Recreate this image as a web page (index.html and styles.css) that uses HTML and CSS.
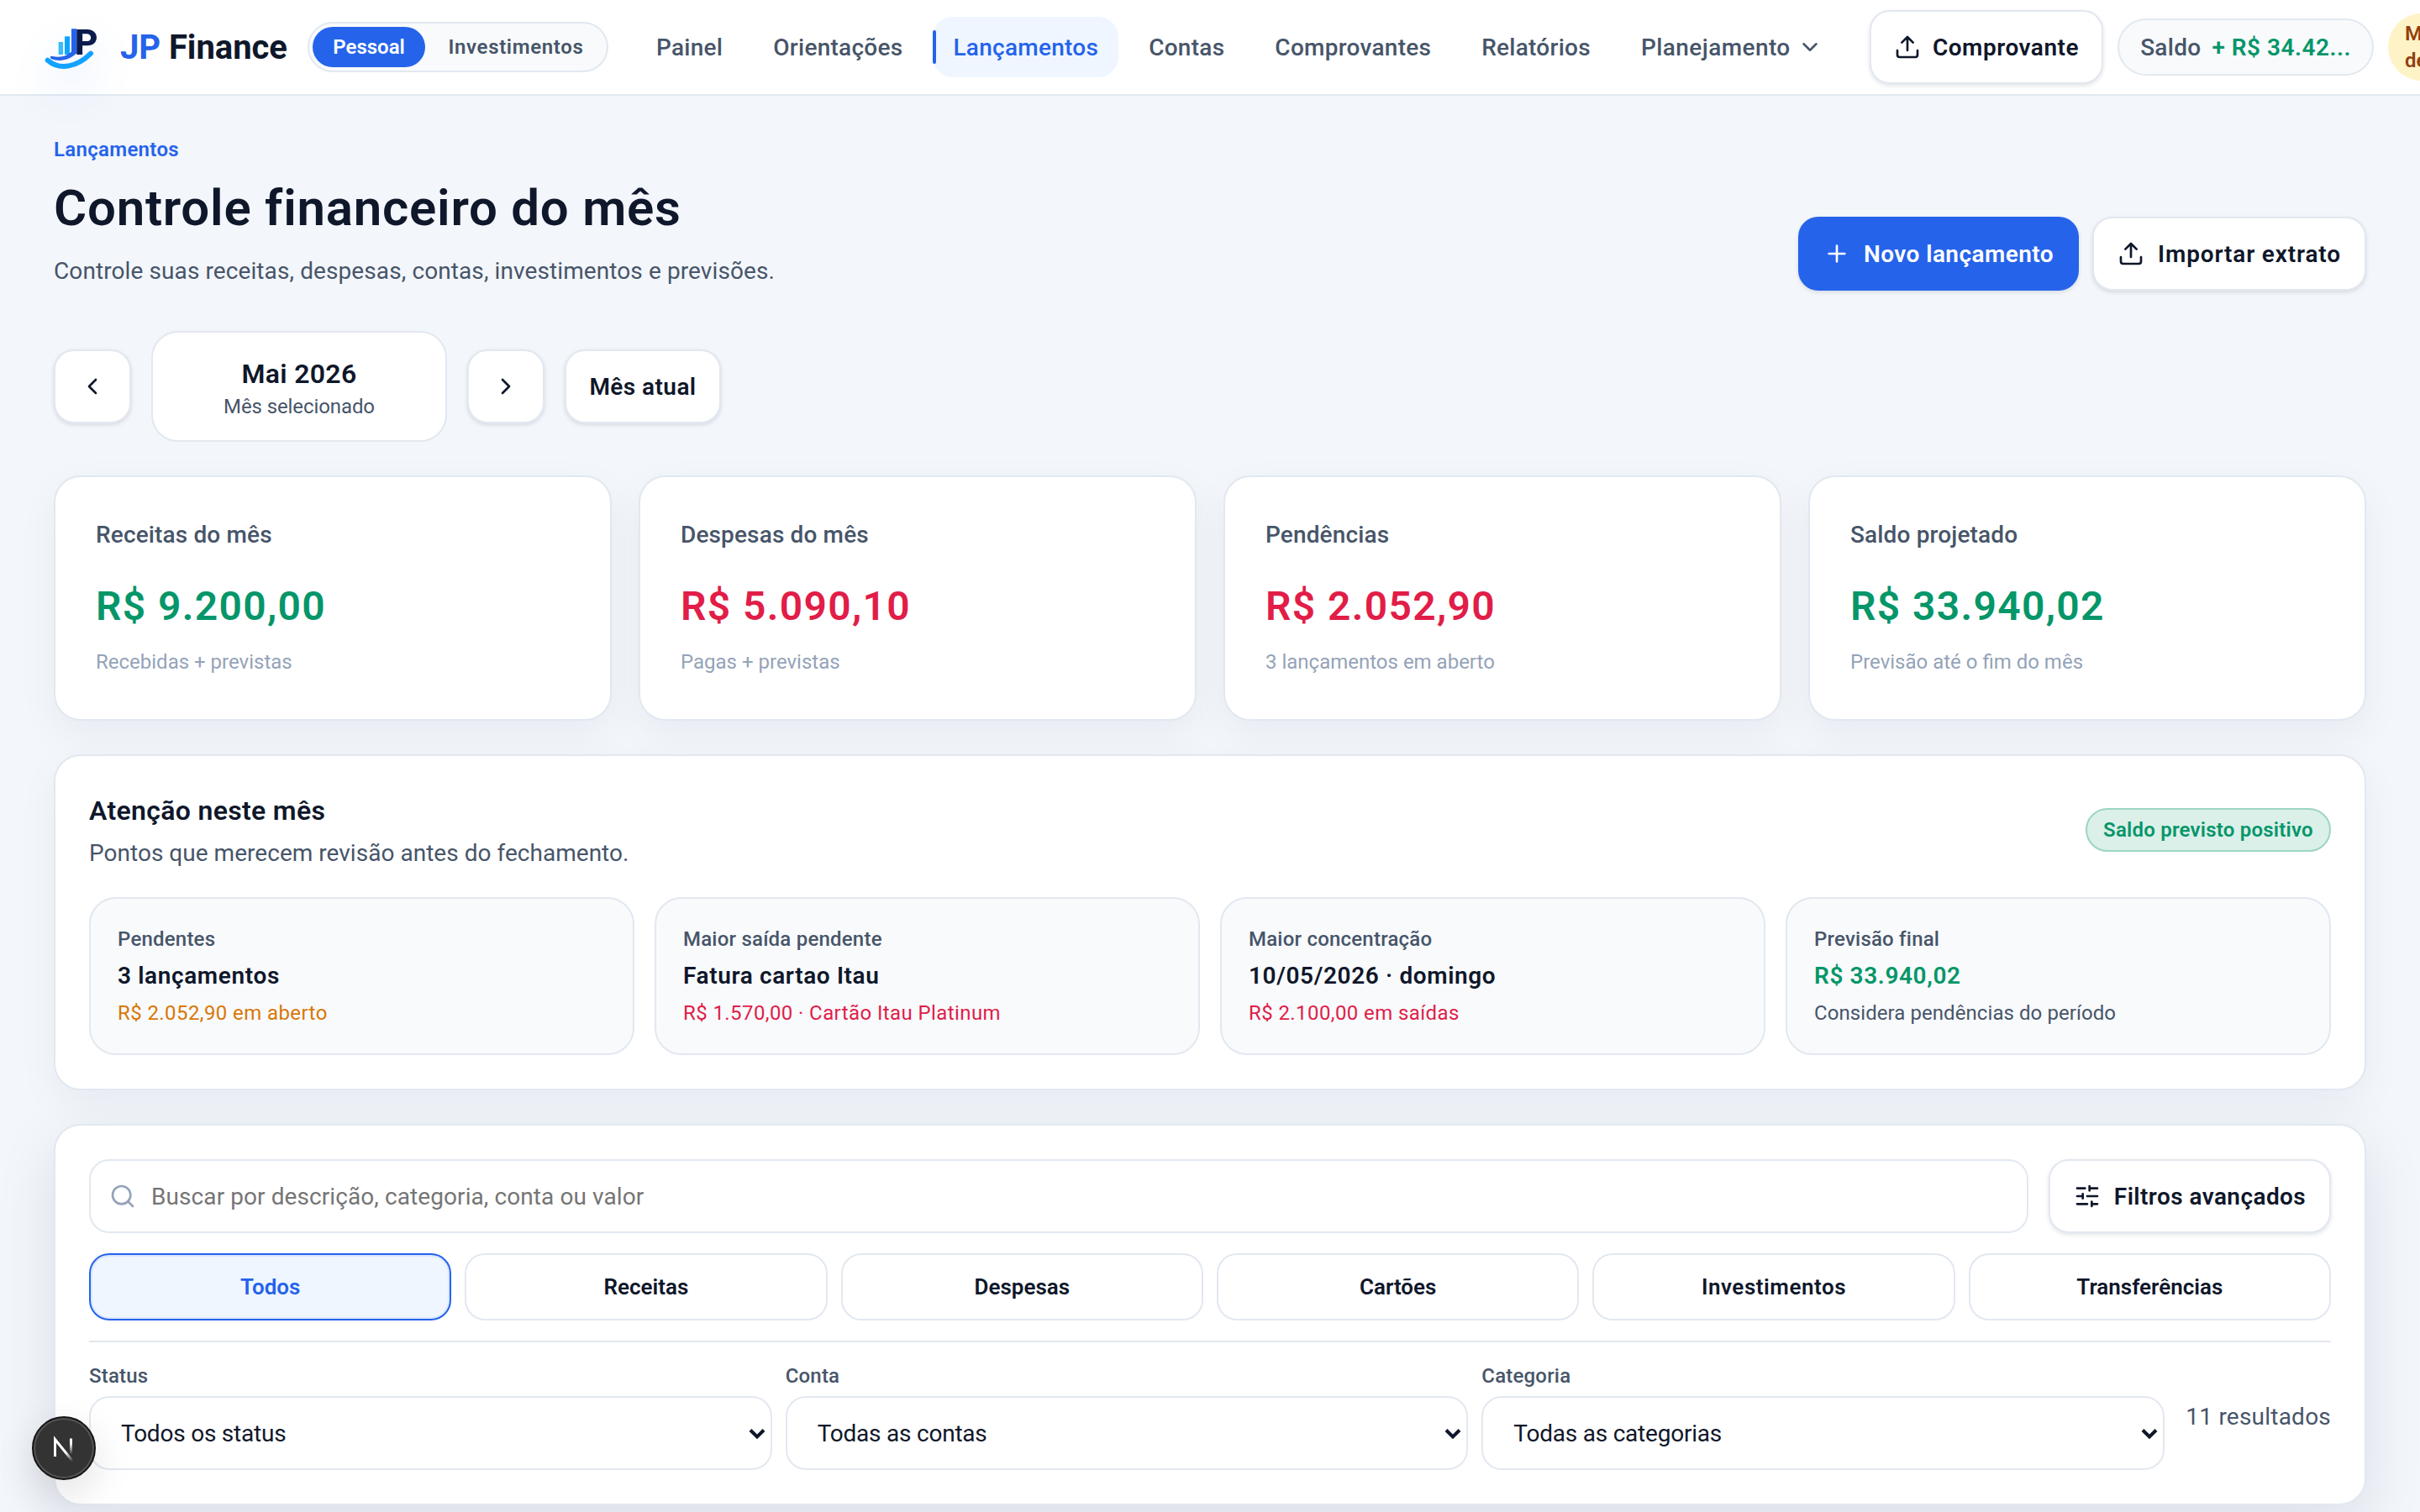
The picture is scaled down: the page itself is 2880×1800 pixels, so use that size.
FILE: index.html
```html
<!DOCTYPE html><html lang="pt-BR">
<head>
  <meta charset="UTF-8" />
  <meta name="viewport" content="width=device-width, initial-scale=1.0" />
  <title>Lançamentos - JP Finance</title>
  <link rel="stylesheet" href="styles.css">
</head>
<body>
  <header class="topbar">
    <svg class="logo" viewBox="0 0 252 192">
      <rect x="77" y="78" width="16" height="45" fill="#38bdf8" />
      <rect x="99" y="58" width="18" height="65" fill="#0ea5ff" />
      <path d="M123 31H142V118C115 145 78 149 50 138C45 133 48 127 55 129C85 135 110 128 123 112Z" fill="#2563eb" />
      <text class="logo-letter" x="134" y="123">P</text>
      <path d="M38 143C82 181 144 167 192 119" fill="none" stroke="#12a3ff" stroke-width="18" stroke-linecap="round" />
    </svg>
    <div class="brand"><span>JP</span> Finance</div>
    <div class="mode-switch">
      <button class="mode active">Pessoal</button>
      <button class="mode wide">Investimentos</button>
    </div>
    <nav class="nav">
      <a href="#">Painel</a>
      <a href="#">Orientações</a>
      <a href="#" class="active">Lançamentos</a>
      <a href="#">Contas</a>
      <a href="#">Comprovantes</a>
      <a href="#">Relatórios</a>
      <a href="#" class="more">Planejamento
        <svg class="icon-sm" viewBox="0 0 24 24"><path d="m6 9 6 6 6-6" /></svg>
      </a>
    </nav>
    <button class="btn btn-receipt">
      <svg class="icon" viewBox="0 0 24 24"><path d="M21 15v4a2 2 0 0 1-2 2H5a2 2 0 0 1-2-2v-4M17 8l-5-5-5 5M12 3v12" /></svg>
      Comprovante
    </button>
    <div class="balance"><span>Saldo</span> <b>+ R$ 34.42...</b></div>
    <div class="demo">Modo<br>demo</div>
  </header>

  <main class="page">
    <!-- Cabeçalho -->
    <div class="page-head">
      <div class="heading">
        <div class="eyebrow">Lançamentos</div>
        <h1>Controle financeiro do mês</h1>
        <p>Controle suas receitas, despesas, contas, investimentos e previsões.</p>
      </div>
      <div class="actions">
        <button class="btn btn-primary">
          <svg class="icon" viewBox="0 0 24 24"><path d="M5 12h14M12 5v14" /></svg>
          Novo lançamento
        </button>
        <button class="btn btn-import">
          <svg class="icon" viewBox="0 0 24 24"><path d="M21 15v4a2 2 0 0 1-2 2H5a2 2 0 0 1-2-2v-4M17 8l-5-5-5 5M12 3v12" /></svg>
          Importar extrato
        </button>
      </div>
    </div>

    <!-- Seletor de mês -->
    <div class="month-row">
      <button class="btn btn-arrow"><svg class="icon" viewBox="0 0 24 24"><path d="m15 18-6-6 6-6" /></svg></button>
      <div class="month">
        <strong>Mai 2026</strong>
        <span>Mês selecionado</span>
      </div>
      <button class="btn btn-arrow"><svg class="icon" viewBox="0 0 24 24"><path d="m9 18 6-6-6-6" /></svg></button>
      <button class="btn btn-today">Mês atual</button>
    </div>

    <!-- Resumo -->
    <div class="stats">
      <div class="stat">
        <div class="stat-label">Receitas do mês</div>
        <div class="stat-value green">R$ 9.200,00</div>
        <div class="stat-hint">Recebidas + previstas</div>
      </div>
      <div class="stat">
        <div class="stat-label">Despesas do mês</div>
        <div class="stat-value red">R$ 5.090,10</div>
        <div class="stat-hint">Pagas + previstas</div>
      </div>
      <div class="stat">
        <div class="stat-label">Pendências</div>
        <div class="stat-value red">R$ 2.052,90</div>
        <div class="stat-hint">3 lançamentos em aberto</div>
      </div>
      <div class="stat">
        <div class="stat-label">Saldo projetado</div>
        <div class="stat-value green">R$ 33.940,02</div>
        <div class="stat-hint">Previsão até o fim do mês</div>
      </div>
    </div>

    <!-- Atenção -->
    <section class="panel">
      <div class="panel-head">
        <div class="panel-title">
          <h2>Atenção neste mês</h2>
          <p>Pontos que merecem revisão antes do fechamento.</p>
        </div>
        <span class="badge">Saldo previsto positivo</span>
      </div>
      <div class="alerts">
        <div class="alert">
          <div class="alert-label">Pendentes</div>
          <div class="alert-value">3 lançamentos</div>
          <div class="alert-note amber">R$ 2.052,90 em aberto</div>
        </div>
        <div class="alert">
          <div class="alert-label">Maior saída pendente</div>
          <div class="alert-value">Fatura cartao Itau</div>
          <div class="alert-note red">R$ 1.570,00 · Cartão Itau Platinum</div>
        </div>
        <div class="alert">
          <div class="alert-label">Maior concentração</div>
          <div class="alert-value">10/05/2026 · domingo</div>
          <div class="alert-note red">R$ 2.100,00 em saídas</div>
        </div>
        <div class="alert">
          <div class="alert-label">Previsão final</div>
          <div class="alert-value green">R$ 33.940,02</div>
          <div class="alert-note muted">Considera pendências do período</div>
        </div>
      </div>
    </section>

    <!-- Filtros -->
    <section class="panel filters">
      <div class="search-row">
        <label class="search">
          <svg class="icon" viewBox="0 0 24 24"><circle cx="11" cy="11" r="8" /><path d="m21 21-4.3-4.3" /></svg>
          <input type="text" placeholder="Buscar por descrição, categoria, conta ou valor">
        </label>
        <button class="btn btn-filters">
          <svg class="icon" viewBox="0 0 24 24"><path d="M10 5H3M12 19H3M14 3v4M16 17v4M21 12h-9M21 19h-5M21 5h-7M8 10v4M8 12H3" /></svg>
          Filtros avançados
        </button>
      </div>
      <div class="tabs">
        <button class="tab active">Todos</button>
        <button class="tab">Receitas</button>
        <button class="tab">Despesas</button>
        <button class="tab">Cartões</button>
        <button class="tab wide">Investimentos</button>
        <button class="tab">Transferências</button>
      </div>
      <div class="selects">
        <label class="field">
          <span>Status</span>
          <div class="select">
            <select><option>Todos os status</option></select>
            <svg viewBox="0 0 20 14"><path d="M2 2.500l8 8 8-8" /></svg>
          </div>
        </label>
        <label class="field">
          <span>Conta</span>
          <div class="select">
            <select><option>Todas as contas</option></select>
            <svg viewBox="0 0 20 14"><path d="M2 2.500l8 8 8-8" /></svg>
          </div>
        </label>
        <label class="field">
          <span>Categoria</span>
          <div class="select">
            <select><option>Todas as categorias</option></select>
            <svg viewBox="0 0 20 14"><path d="M2 2.500l8 8 8-8" /></svg>
          </div>
        </label>
        <div class="results">11 resultados</div>
      </div>
    </section>
  </main>

  <div class="dev-badge">
    <svg viewBox="0 0 76 76">
      <defs>
        <linearGradient id="fadeStem" x1="0" y1="0" x2="0" y2="1">
          <stop offset="0.3" stop-color="#fff" />
          <stop offset="1" stop-color="#fff" stop-opacity="0" />
        </linearGradient>
        <linearGradient id="fadeDiag" gradientUnits="userSpaceOnUse" x1="38" y1="38" x2="49" y2="53">
          <stop offset="0.3" stop-color="#fff" />
          <stop offset="1" stop-color="#fff" stop-opacity="0" />
        </linearGradient>
      </defs>
      <path d="M27.500 48V27.500L48.500 53.500" fill="none" stroke="url(#fadeDiag)" stroke-width="3" />
      <rect x="45" y="26.500" width="3" height="19" fill="url(#fadeStem)" />
    </svg>
  </div>
</body>
</html>
```
FILE: styles.css
```css
* {
  box-sizing: border-box;
}
body {
  margin: 0;
  height: 1800px;
  overflow: hidden;
  position: relative;
  font-family: Roboto, sans-serif;
  font-size: 28px;
  color: #0f172a;
  background: #f3f6fb;
}
h1, h2, p {
  margin: 0;
}
button {
  font-family: inherit;
  color: inherit;
  cursor: pointer;
  white-space: nowrap;
}
.icon {
  width: 32px;
  height: 32px;
  flex-shrink: 0;
  fill: none;
  stroke: currentColor;
  stroke-width: 2;
  stroke-linecap: round;
  stroke-linejoin: round;
}
.green { color: #059669; }
.red { color: #e11d48; }
.amber { color: #d97706; }
.muted { color: #475569; }

/* topo */
.topbar {
  height: 114px;
  display: flex;
  align-items: center;
  padding-left: 44px;
  background: #fff;
  border-bottom: 2px solid #e2e8f0;
}
.logo {
  width: 84px;
  height: 64px;
  flex-shrink: 0;
  overflow: visible;
  filter: drop-shadow(0 24px 24px rgba(37, 99, 235, 0.14));
}
.logo-letter {
  font-size: 129px;
  font-weight: 800;
  fill: #0b1b4d;
}
.brand {
  width: 223px;
  margin-left: 15px;
  flex-shrink: 0;
  font-size: 40px;
  font-weight: 700;
  letter-spacing: -0.001em;
  white-space: nowrap;
}
.brand span {
  color: #2563eb;
}
.mode-switch {
  width: 358px;
  height: 60px;
  flex-shrink: 0;
  display: flex;
  gap: 4px;
  padding: 4px;
  border: 2px solid #e2e8f0;
  border-radius: 999px;
  background: #f8fafc;
}
.mode {
  width: 134px;
  border: none;
  padding: 0;
  border-radius: 999px;
  background: none;
  font-size: 24px;
  font-weight: 600;
  color: #475569;
}
.mode.wide {
  flex: 1;
  letter-spacing: 0.027em;
}
.mode.active {
  background: #2563eb;
  color: #fff;
}
.nav {
  width: 1468px;
  margin-left: 33px;
  flex-shrink: 0;
  display: flex;
  gap: 12px;
}
.nav a {
  position: relative;
  height: 72px;
  display: flex;
  align-items: center;
  padding: 0 24px;
  border-radius: 24px;
  color: #475569;
  font-weight: 500;
  letter-spacing: 0.0095em;
  text-decoration: none;
}
.nav a.active {
  background: #eff6ff;
  color: #2563eb;
}
.nav a.active::before {
  content: "";
  position: absolute;
  left: 0;
  top: 16px;
  width: 4px;
  height: 40px;
  border-radius: 4px;
  background: #2563eb;
}
.nav a.more {
  gap: 8px;
  letter-spacing: 0.015em;
}
.icon-sm {
  width: 30px;
  height: 30px;
  fill: none;
  stroke: currentColor;
  stroke-width: 2;
  stroke-linecap: round;
  stroke-linejoin: round;
}
.balance {
  width: 305px;
  height: 68px;
  margin-left: 17px;
  flex-shrink: 0;
  display: flex;
  align-items: center;
  justify-content: center;
  gap: 13px;
  border: 2px solid #e2e8f0;
  border-radius: 999px;
  background: #f8fafc;
  color: #475569;
  font-weight: 500;
  letter-spacing: 0.01em;
  white-space: nowrap;
}
.balance b {
  color: #059669;
  font-weight: 600;
  letter-spacing: 0.018em;
}
.demo {
  height: 80px;
  width: 120px;
  margin-left: 17px;
  flex-shrink: 0;
  padding: 8px 20px;
  border-radius: 999px;
  background: #fef3c7;
  color: #92400e;
  font-size: 24px;
  line-height: 32px;
  font-weight: 600;
}

/* botões */
.btn {
  height: 88px;
  flex-shrink: 0;
  display: flex;
  align-items: center;
  justify-content: center;
  gap: 16px;
  padding: 0;
  border: 2px solid #e2e8f0;
  border-radius: 24px;
  background: #fff;
  font-size: 28px;
  font-weight: 600;
  letter-spacing: 0.015em;
  box-shadow: 0 2px 5px rgba(15, 23, 42, 0.12);
}
.btn-receipt {
  width: 278px;
  letter-spacing: 0.018em;
  gap: 14px;
}
.btn-primary {
  width: 334px;
  border: none;
  background: #2563eb;
  color: #fff;
}
.btn-import {
  width: 326px;
  letter-spacing: 0.03em;
}
.btn-arrow {
  width: 92px;
}
.btn-today {
  width: 186px;
}
.btn-filters {
  width: 336px;
}

/* página */
.page {
  display: flex;
  flex-direction: column;
  gap: 40px;
  padding: 48px 64px 0;
}
.page-head {
  display: flex;
  justify-content: space-between;
  align-items: flex-end;
}
.heading {
  padding-bottom: 3px;
}
.eyebrow {
  font-size: 24px;
  line-height: 32px;
  font-weight: 600;
  letter-spacing: 0.013em;
  color: #2563eb;
}
h1 {
  margin: 18px 0 19px;
  font-size: 60px;
  line-height: 72px;
  font-weight: 600;
  letter-spacing: 0.0125em;
}
.heading p,
.panel-title p {
  line-height: 40px;
  letter-spacing: 0.001em;
  color: #475569;
}
.heading p {
  letter-spacing: 0.0035em;
}
.actions {
  display: flex;
  gap: 16px;
}
.month-row {
  display: flex;
  align-items: center;
  gap: 24px;
  margin-top: 8px;
}
.month {
  width: 352px;
  height: 132px;
  padding-top: 29px;
  border: 2px solid #e2e8f0;
  border-radius: 32px;
  background: #fff;
  text-align: center;
}
.month strong {
  display: block;
  margin-bottom: 3px;
  font-size: 32px;
  line-height: 40px;
  font-weight: 600;
  letter-spacing: 0.01em;
}
.month span {
  display: block;
  font-size: 24px;
  line-height: 32px;
  letter-spacing: -0.004em;
  color: #475569;
}
.stats {
  display: grid;
  grid-template-columns: repeat(4, 1fr);
  gap: 32px;
}
.stat {
  height: 292px;
  padding: 49px 48px;
  border: 2px solid #e2e8f0;
  border-radius: 32px;
  background: #fff;
  box-shadow: 0 16px 48px rgba(15, 23, 42, 0.05);
}
.stat-label {
  line-height: 40px;
  font-weight: 500;
  letter-spacing: 0.005em;
  color: #475569;
}
.stat-value {
  margin: 37px 0 22px;
  font-size: 48px;
  line-height: 56px;
  font-weight: 600;
  letter-spacing: 0.028em;
}
.stat-hint {
  font-size: 24px;
  line-height: 32px;
  color: #94a3b8;
}
.panel {
  padding: 40px;
  border: 2px solid #e2e8f0;
  border-radius: 32px;
  background: #fff;
  box-shadow: 0 16px 48px rgba(15, 23, 42, 0.05);
}
.panel-head {
  display: flex;
  justify-content: space-between;
  align-items: center;
  margin-bottom: 32px;
}
.panel-title {
  padding-top: 3px;
}
h2 {
  margin-bottom: 9px;
  font-size: 32px;
  line-height: 44px;
  font-weight: 600;
  letter-spacing: 0.01em;
}
.badge {
  width: 292px;
  height: 52px;
  border: 2px solid #9bd5c3;
  border-radius: 999px;
  background: #dbf0e9;
  color: #059669;
  font-size: 24px;
  line-height: 48px;
  font-weight: 600;
  letter-spacing: 0.009em;
  text-align: center;
}
.alerts {
  display: grid;
  grid-template-columns: repeat(4, 1fr);
  gap: 24px;
}
.alert {
  padding: 32px;
  border: 2px solid #e2e8f0;
  border-radius: 32px;
  background: #f8fafc;
}
.alert-label,
.alert-note {
  font-size: 24px;
  line-height: 32px;
}
.alert-label {
  font-weight: 500;
  letter-spacing: 0.009em;
  color: #475569;
}
.alert-value {
  margin: 8px 0;
  line-height: 40px;
  font-weight: 600;
  letter-spacing: 0.022em;
}
.alert-note {
  letter-spacing: 0.017em;
}
.alert-note.muted {
  letter-spacing: 0.003em;
}

/* filtros */
.filters {
  box-shadow: 0 24px 72px rgba(15, 23, 42, 0.1);
}
.search-row {
  display: flex;
  gap: 24px;
}
.search {
  flex: 1;
  height: 88px;
  display: flex;
  align-items: center;
  gap: 18px;
  padding: 0 22px;
  border: 2px solid #e2e8f0;
  border-radius: 24px;
  color: #94a3b8;
}
.search input {
  flex: 1;
  border: none;
  padding: 0;
  outline: none;
  background: none;
  font-family: inherit;
  font-size: 28px;
  letter-spacing: 0.003em;
}
.search input::placeholder {
  color: #757575;
}
.tabs {
  display: grid;
  grid-template-columns: repeat(6, 1fr);
  gap: 16px;
  margin: 24px 0;
}
.tab {
  height: 80px;
  border: 2px solid #e2e8f0;
  border-radius: 24px;
  background: #fff;
  font-size: 26px;
  font-weight: 600;
}
.tab.wide {
  letter-spacing: 0.02em;
}
.tab.active {
  border-color: #2563eb;
  background: #eff6ff;
  color: #2563eb;
  box-shadow: inset 0 0 0 2px rgba(37, 99, 235, 0.1);
}
.selects {
  display: grid;
  grid-template-columns: repeat(3, 1fr) 182px;
  column-gap: 16px;
  align-items: center;
  padding-top: 24px;
  border-top: 2px solid #e2e8f0;
}
.field span {
  display: block;
  margin-bottom: 8px;
  font-size: 24px;
  line-height: 32px;
  font-weight: 500;
  letter-spacing: 0.008em;
  color: #475569;
}
.select {
  position: relative;
}
.select select {
  appearance: none;
  display: block;
  width: 100%;
  height: 88px;
  padding: 0 36px;
  border: 2px solid #e2e8f0;
  border-radius: 24px;
  background: #fff;
  color: #0f172a;
  font-family: inherit;
  font-size: 28px;
  letter-spacing: -0.008em;
}
.select svg {
  position: absolute;
  right: 8px;
  top: 38px;
  width: 20px;
  height: 14px;
  fill: none;
  stroke: #0f172a;
  stroke-width: 4;
}
.results {
  color: #475569;
  letter-spacing: 0.008em;
  text-align: right;
  white-space: nowrap;
}

/* indicador de desenvolvimento */
.dev-badge {
  position: absolute;
  left: 38px;
  bottom: 38px;
  width: 76px;
  height: 76px;
  border-radius: 50%;
  background: #333;
  border: 2px solid #161616;
  box-shadow: inset 0 0 0 2px #555, 0 16px 48px rgba(0, 0, 0, 0.12);
}
.dev-badge svg {
  display: block;
  width: 76px;
  height: 76px;
  margin: -2px;
}
```
